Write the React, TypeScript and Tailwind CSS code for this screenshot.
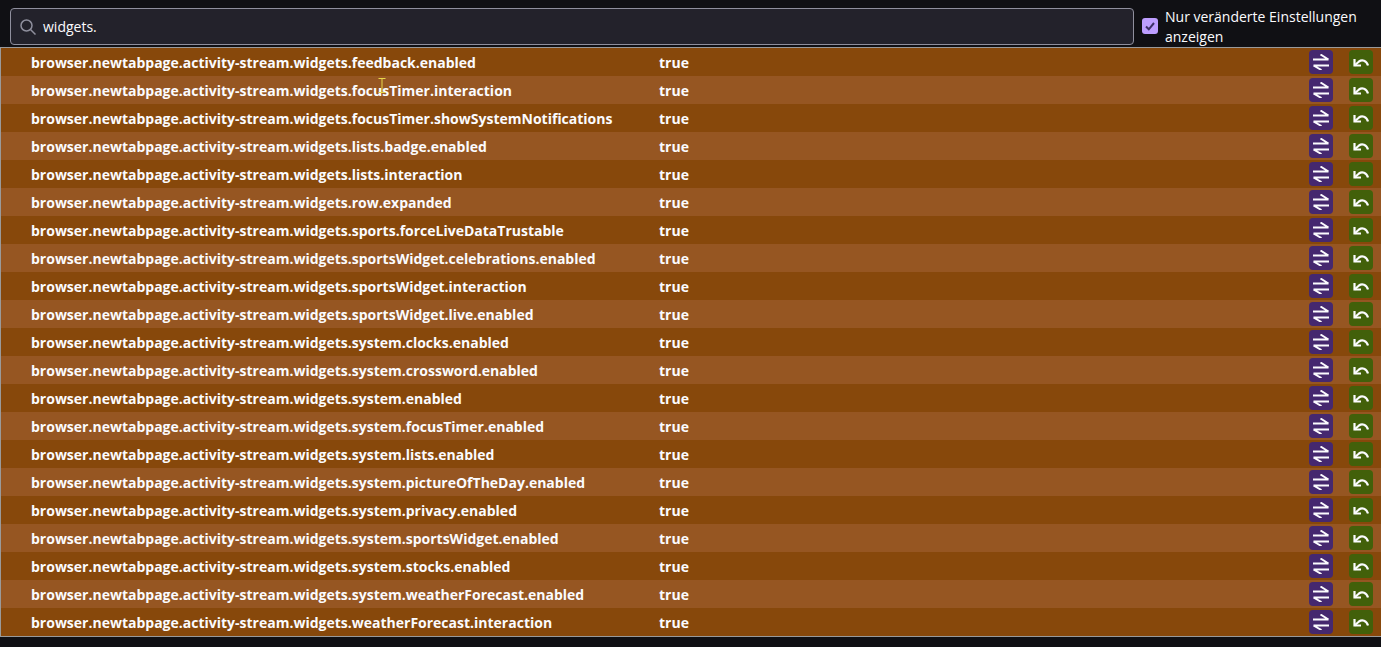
import React from 'react';

const prefs = [
  'feedback.enabled',
  'focusTimer.interaction',
  'focusTimer.showSystemNotifications',
  'lists.badge.enabled',
  'lists.interaction',
  'row.expanded',
  'sports.forceLiveDataTrustable',
  'sportsWidget.celebrations.enabled',
  'sportsWidget.interaction',
  'sportsWidget.live.enabled',
  'system.clocks.enabled',
  'system.crossword.enabled',
  'system.enabled',
  'system.focusTimer.enabled',
  'system.lists.enabled',
  'system.pictureOfTheDay.enabled',
  'system.privacy.enabled',
  'system.sportsWidget.enabled',
  'system.stocks.enabled',
  'system.weatherForecast.enabled',
  'weatherForecast.interaction',
];

function ToggleIcon() {
  return (
    <svg width="16" height="16" viewBox="0 0 16 16" fill="none" stroke="#fbfbfe" strokeWidth="2">
      <path d="M0 5.5h15.5M7.5 0.5l8 5" />
      <path d="M0.5 11.5h15.5M0.5 11.5l8 4.5" />
    </svg>
  );
}

function ResetIcon() {
  return (
    <svg width="16" height="16" viewBox="0 0 16 16" fill="none" stroke="#fbfbfe" strokeWidth="2.2">
      <path d="M1.5 5v6.5H8" />
      <path d="M1.5 11.5L6 7.5c3-2.2 7.5-1.2 9 4" />
    </svg>
  );
}

export default function App() {
  return (
    <div className="h-[647px] bg-[#101014] font-['Open_Sans','Noto_Sans',sans-serif] text-[#fbfbfe] overflow-hidden relative">
      {/* Toolbar */}
      <div className="h-[47px] flex items-start pl-[10px] pt-2">
        <div className="w-[1124px] h-[37px] flex items-center gap-[7px] px-[9px] bg-[#23222b] border border-[#8f8f9d] rounded-[4px]">
          <svg width="16" height="16" viewBox="0 0 16 16" fill="none" stroke="#8f8f9d" strokeWidth="1.5">
            <circle cx="6.5" cy="6.5" r="5.5" />
            <path d="M10.5 10.5l5 5" />
          </svg>
          <span className="text-[14px]">widgets.</span>
        </div>
        <label className="flex items-center ml-2 -mt-[1px]">
          <span className="w-4 h-4 mb-[2px] rounded-[3px] bg-[#bd9eff] flex items-center justify-center">
            <svg width="12" height="12" viewBox="0 0 12 12" fill="none" stroke="#3c2f66" strokeWidth="2">
              <path d="M2 6.5l2.8 2.8L10 3" />
            </svg>
          </span>
          <span className="ml-[7px] w-[210px] text-[14px] leading-[20px]">Nur veränderte Einstellungen anzeigen</span>
        </label>
      </div>

      {/* Preference list */}
      <div className="border-y border-l border-[#9a9a9a]">
        {prefs.map((name, i) => (
          <div key={name} className={`h-[28px] flex items-center text-[14px] font-bold ${i % 2 === 0 ? 'bg-[#87480b]' : 'bg-[#965622]'}`}>
            <div className="w-[628px] ml-[30px] whitespace-nowrap">browser.newtabpage.activity-stream.widgets.{name}</div>
            <div className="flex-1">true</div>
            <button className="w-6 h-6 rounded-[4px] bg-[#45286f] flex items-center justify-center">
              <ToggleIcon />
            </button>
            <button className="w-6 h-6 rounded-[4px] bg-[#42600a] flex items-center justify-center ml-4 mr-2">
              <ResetIcon />
            </button>
          </div>
        ))}
      </div>

      {/* text cursor caught in the shot */}
      <svg className="absolute left-[376px] top-[77px]" width="12" height="17" viewBox="0 0 12 17" fill="none" stroke="#e8d84a" strokeWidth="1">
        <path d="M2.5 1.5h7M6 1.5v14M2.5 15.5h7" />
      </svg>
    </div>
  );
}
